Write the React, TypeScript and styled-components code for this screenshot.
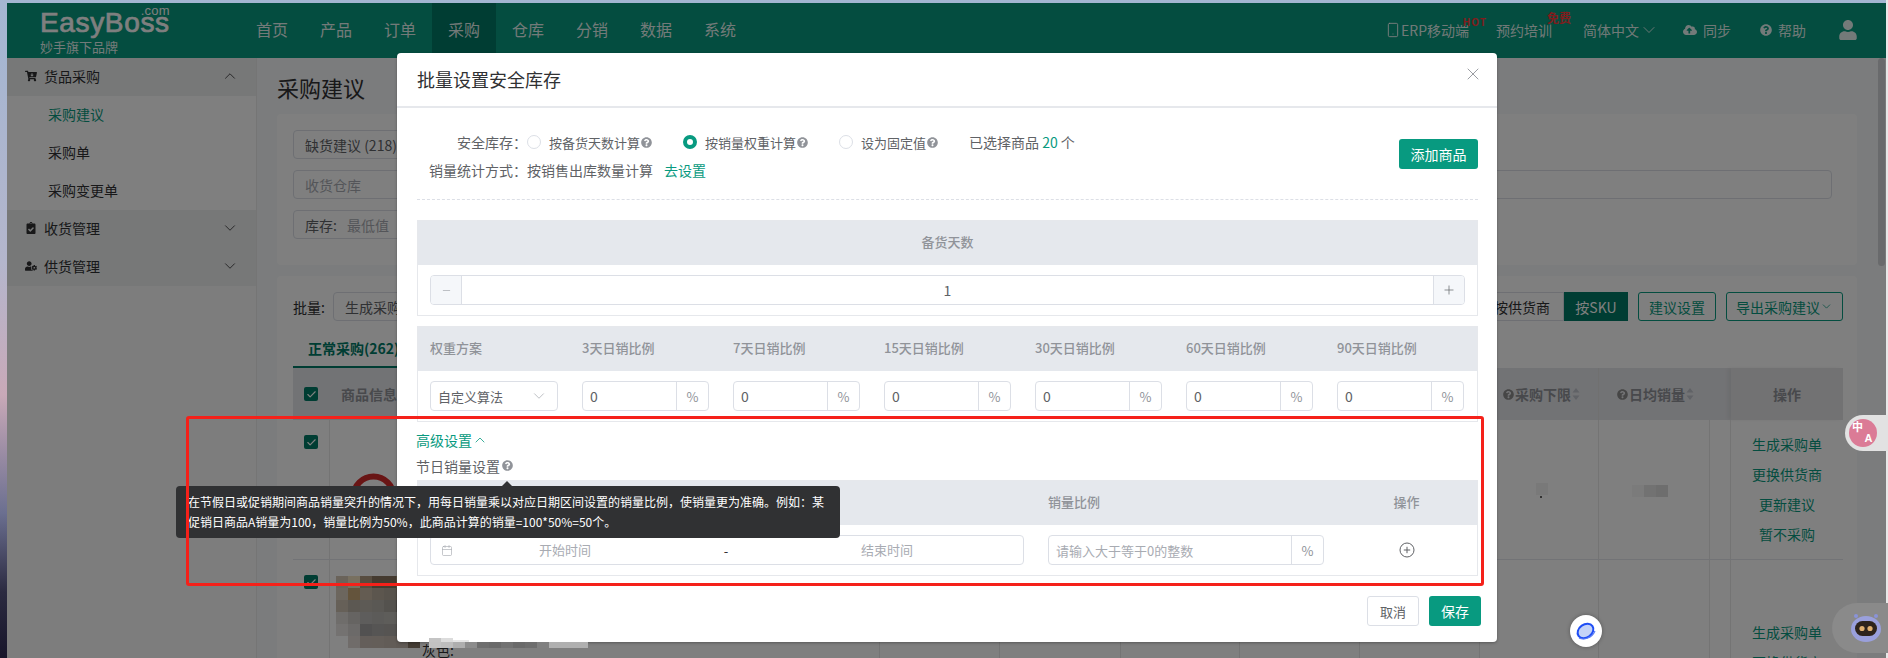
import React from "react";
import styled, { createGlobalStyle } from "styled-components";
import { ChevronUp, ChevronDown, X, Plus, Minus, Smartphone, Calendar, Check } from "lucide-react";
import { FaQuestionCircle, FaCloudUploadAlt, FaUser, FaClipboardCheck, FaUserCog, FaCartArrowDown } from "react-icons/fa";

const TEAL = "#089a80";
const FONT = `"Noto Sans CJK SC", "Noto Sans", sans-serif`;

const Global = createGlobalStyle`
  html, body { margin: 0; padding: 0; width: 1888px; height: 658px; overflow: hidden; }
  * { box-sizing: border-box; }
  body { font-family: ${FONT}; font-size: 14px; color: #606266; }
`;

const Desktop = styled.div`
  position: relative; width: 1888px; height: 658px; overflow: hidden; padding: 3px 2px 0 7px;
  background:
    linear-gradient(to left, #e8e8e8 2px, transparent 2px),
    linear-gradient(180deg, #a3b6d2 0%, #b4b6cc 40%, #c9a9b8 60%, #6b6f90 78%, #2b2a40 90%, #17152a 100%);
`;
const Win = styled.div`
  position: relative; width: 1879px; height: 655px; background: #fff; display: flex; flex-direction: column; overflow: hidden;
`;
const Header = styled.header`
  height: 55px; flex: none; background: ${TEAL}; color: #fff; display: flex; align-items: stretch;
`;
const Logo = styled.div`
  width: 233px; flex: none; padding: 4px 0 0 33px; display: flex; flex-direction: column;
`;
const LogoMain = styled.div`
  position: relative; width: 130px; font: 400 28px/32px "Liberation Sans", sans-serif; color: #fff; letter-spacing: 0.65px; -webkit-text-stroke: 0.7px #fff;
`;
const LogoCom = styled.span`
  position: absolute; right: 0; top: -3px; font: 400 13px/14px "Liberation Sans", sans-serif; letter-spacing: 0.3px; -webkit-text-stroke: 0;
`;
const LogoSub = styled.div`
  font-size: 13px; line-height: 18px; margin-top: -1px; opacity: .9;
`;
const Nav = styled.nav`
  display: flex; align-items: stretch; flex: 1;
`;
const NavItem = styled.div<{ $active?: boolean }>`
  width: 64px; display: flex; align-items: center; justify-content: center; font-size: 16px; padding-bottom: 3px;
  color: rgba(255,255,255,.92); background: ${(p) => (p.$active ? "#007a66" : "transparent")};
`;
const HeaderRight = styled.div`
  display: flex; align-items: center; font-size: 14px; color: rgba(255,255,255,.9); padding-bottom: 2px;
`;
const HItem = styled.div<{ $gap: number }>`
  position: relative; display: flex; align-items: center; margin-right: ${(p) => p.$gap}px; white-space: nowrap; gap: 4px; line-height: 20px;
`;
const Badge = styled.span<{ $size: number; $right: number; $top: number }>`
  position: absolute; top: ${(p) => p.$top}px; right: ${(p) => p.$right}px; font-size: ${(p) => p.$size}px; font-weight: 700; line-height: 14px; color: #ff3b3b; letter-spacing: ${(p) => (p.$size < 12 ? "1px" : "0")};
`;

const Body = styled.div`
  flex: 1; display: flex; min-height: 0;
`;
const Sidebar = styled.aside`
  width: 250px; flex: none; background: #fafafa; border-right: 1px solid #eaeaea;
`;
const MenuHead = styled.div`
  height: 38px; background: #eff0f1; color: #303133; display: flex; align-items: center; padding: 0 17px 2px 18px; gap: 7px; font-size: 14px;
  span { flex: 1; }
`;
const MenuItem = styled.div<{ $active?: boolean }>`
  height: 38px; background: #fff; display: flex; align-items: center; padding: 0 0 2px 41px; font-size: 14px;
  color: ${(p) => (p.$active ? TEAL : "#303133")};
`;
const Main = styled.main`
  flex: 1; min-width: 0; background: #f7f8fa; padding: 0 29px 0 20px;
`;
const PageTitle = styled.h1`
  margin: 0; height: 56px; display: flex; align-items: center; font-size: 22px; font-weight: 400; color: #303133; padding-top: 2px;
`;
const Card = styled.section`
  background: #fff; padding: 16px 25px 0 16px; border-radius: 4px;
`;
const FilterCard = styled(Card)`
  height: 151px; margin-bottom: 11px; display: flex; flex-direction: column; gap: 11px;
`;
const FilterRow = styled.div`
  display: flex; justify-content: space-between;
`;
const Field = styled.div<{ $w: number; $dim?: boolean }>`
  width: ${(p) => p.$w}px; height: 29px; border: 1px solid #dcdfe6; border-radius: 4px; display: flex; align-items: center; padding: 0 11px; font-size: 14px; white-space: nowrap; overflow: hidden;
  color: ${(p) => (p.$dim ? "#a8abb2" : "#606266")};
  b { font-weight: 400; color: #606266; margin-right: 10px; }
`;
const TableCard = styled(Card)`
  height: 400px; padding-right: 14px;
`;
const Toolbar = styled.div`
  display: flex; align-items: center; height: 29px;
`;
const BatchLabel = styled.span`
  color: #303133; margin-right: 8px; font-size: 14px;
`;
const Spacer = styled.div`flex: 1;`;
const Seg = styled.div<{ $on?: boolean }>`
  height: 29px; padding: 0 ${(p) => (p.$on ? 7 : 13)}px; display: flex; align-items: center; justify-content: center; font-size: 14px; border: 1px solid #dcdfe6; min-width: ${(p) => (p.$on ? 64 : 0)}px;
  color: ${(p) => (p.$on ? "#fff" : "#303133")}; background: ${(p) => (p.$on ? "#007a66" : "#fff")};
  border-color: ${(p) => (p.$on ? "#007a66" : "#dcdfe6")};
`;
const OutlineBtn = styled.div<{ $w: number }>`
  width: ${(p) => p.$w}px; height: 29px; margin-left: 10px; display: flex; align-items: center; justify-content: center; font-size: 14px; color: ${TEAL}; border: 1px solid ${TEAL}; border-radius: 3px; background: #fff; white-space: nowrap;
`;
const Tabs = styled.div`
  height: 47px; display: flex; align-items: flex-end;
`;
const Tab = styled.div`
  width: 200px; height: 36px; padding-left: 15px; border-bottom: 2px solid #007a66; color: #007a66; font-weight: 700; font-size: 14px; line-height: 32px;
`;
const GRID = "37px 550px 120px 121px 119px 120px 120px 119px 111px 21px 112px";
const THead = styled.div`
  display: grid; grid-template-columns: ${GRID}; height: 52px; background: #e5e6ea; color: #909399; font-size: 14px; font-weight: 700;
`;
const HCell = styled.div<{ $from: number; $to: number; $center?: boolean; $line?: boolean; $pad: number }>`
  grid-column: ${(p) => p.$from} / ${(p) => p.$to}; display: flex; align-items: center; gap: 1px; padding-left: ${(p) => p.$pad}px;
  justify-content: ${(p) => (p.$center ? "center" : "flex-start")};
  border-right: ${(p) => (p.$line ? "1px solid #e0e0e0" : "0")};
`;
const FixedHead = styled(HCell)`
  background: #e4e4e6; box-shadow: -3px 0 4px rgba(0,0,0,.06);
`;
const TRow = styled.div<{ $h: number }>`
  display: grid; grid-template-columns: ${GRID}; height: ${(p) => p.$h}px; border-bottom: 1px solid #e4e7ed;
`;
const TCell = styled.div`
  position: relative; border-right: 1px solid #e9e9e9; min-width: 0;
`;
const CheckBox = styled.div`
  width: 14px; height: 14px; border-radius: 2px; background: #007a66; color: #fff; display: flex; align-items: center; justify-content: center; margin: 15px 0 0 11px;
`;
const HeadCheck = styled(CheckBox)`
  margin: 0 0 0 11px; align-self: center;
`;
const ActionCol = styled.div<{ $top: number }>`
  display: flex; flex-direction: column; align-items: center; gap: 10px; padding-top: ${(p) => p.$top}px; color: ${TEAL}; font-size: 14px; line-height: 20px; white-space: nowrap;
`;
const Blot = styled.svg<{ $l: number; $t: number }>`
  position: absolute; left: ${(p) => p.$l}px; top: ${(p) => p.$t}px; display: block;
`;
const ProductText = styled.div`
  position: absolute; left: 92px; top: 80px; color: #303133; font-size: 14px; line-height: 20px; white-space: nowrap;
`;

/* overlay */
const Overlay = styled.div`
  position: absolute; inset: 0; background: rgba(0,0,0,.5);
`;
const Modal = styled.div`
  position: absolute; left: 390px; top: 50px; width: 1100px; height: 589px; background: #fff; border-radius: 4px; display: flex; flex-direction: column; box-shadow: 0 1px 3px rgba(0,0,0,.3);
`;
const MHead = styled.div`
  height: 55px; flex: none; padding: 0 14px 2px 20px; border-bottom: 2px solid #e6e8ec; display: flex; align-items: center; justify-content: space-between;
  font-size: 18px; color: #303133;
  svg { color: #909399; margin-top: -9px; }
`;
const MBody = styled.div`
  flex: 1; padding: 21px 19px 0 20px; display: flex; flex-direction: column; min-height: 0;
`;
const TopArea = styled.div`
  display: flex; justify-content: space-between; align-items: flex-start; height: 56px;
`;
const FormCol = styled.div`
  display: flex; flex-direction: column; margin-top: -1px;
`;
const FormRow = styled.div`
  display: flex; align-items: center; height: 28px; white-space: nowrap;
`;
const Label = styled.div`
  width: 110px; text-align: right; font-size: 14px; color: #606266;
`;
const RadioItem = styled.div`
  display: flex; align-items: center; margin-right: 31px; font-size: 13px; color: #606266;
`;
const RadioDot = styled.span<{ $on?: boolean }>`
  width: 14px; height: 14px; border-radius: 50%; margin-right: 8px; flex: none;
  border: ${(p) => (p.$on ? `4.5px solid ${TEAL}` : "1px solid #dcdfe6")}; background: #fff;
`;
const Help = styled(FaQuestionCircle)`
  color: #909399; font-size: 11px; margin-left: 1px; flex: none;
`;
const THelp = styled(FaQuestionCircle)`
  color: #8c8c8c; font-size: 11px; flex: none;
`;
const TealText = styled.span`
  color: ${TEAL};
`;
const Link = styled.span`
  color: ${TEAL}; margin-left: 11px; font-size: 14px;
`;
const PrimaryBtn = styled.div<{ $w: number }>`
  width: ${(p) => p.$w}px; height: 30px; background: ${TEAL}; color: #fff; border-radius: 3px; display: flex; align-items: center; justify-content: center; font-size: 14px; flex: none;
`;
const AddBtn = styled(PrimaryBtn)`
  margin-top: 10px;
`;
const Dashed = styled.div`
  border-top: 1px dashed #dcdfe6; margin-top: 14px; width: 1061px;
`;
const Table = styled.div<{ $mt: number }>`
  width: 1061px; border: 1px solid #e6e8ec; margin-top: ${(p) => p.$mt}px; flex: none;
`;
const THeader = styled.div<{ $cols: string }>`
  display: grid; grid-template-columns: ${(p) => p.$cols}; height: 44px; padding-bottom: 3px; background: #e5e8ed; align-items: center; font-size: 13px; font-weight: 500; color: #909399;
`;
const THCell = styled.div<{ $center?: boolean }>`
  padding-left: ${(p) => (p.$center ? 0 : 12)}px; text-align: ${(p) => (p.$center ? "center" : "left")};
`;
const TBody = styled.div<{ $cols: string }>`
  display: grid; grid-template-columns: ${(p) => p.$cols}; height: 50px; align-items: center;
`;
const BCell = styled.div<{ $center?: boolean }>`
  padding: 0 12px; display: flex; align-items: center; justify-content: ${(p) => (p.$center ? "center" : "flex-start")};
`;
const Box = styled.div`
  height: 30px; width: 100%; border: 1px solid #dcdfe6; border-radius: 4px; display: flex; align-items: center; background: #fff; font-size: 13px; color: #606266; overflow: hidden;
`;
const StepBtn = styled.div`
  width: 31px; height: 100%; flex: none; background: #f5f7fa; color: #909399; display: flex; align-items: center; justify-content: center;
`;
const StepLeft = styled(StepBtn)`border-right: 1px solid #dcdfe6;`;
const StepRight = styled(StepBtn)`border-left: 1px solid #dcdfe6; color: #606266;`;
const StepValue = styled.div`
  flex: 1; text-align: center; font-size: 14px; padding-bottom: 1px;
`;
const BoxText = styled.div<{ $muted?: boolean }>`
  flex: 1; padding-left: 7px; white-space: nowrap; font-size: ${(p) => (p.$muted ? 13 : 14)}px; color: ${(p) => (p.$muted ? "#a8abb2" : "#606266")};
`;
const Addon = styled.div`
  width: 32px; height: 100%; flex: none; border-left: 1px solid #dcdfe6; display: flex; align-items: center; justify-content: center; color: #909399; font-size: 13px;
`;
const SelectBox = styled(Box)`
  padding: 0 7px; justify-content: space-between; font-size: 13px;
  svg { color: #a8abb2; margin-right: 2px; }
`;
const Advanced = styled.div`
  margin-top: 9px; height: 20px; line-height: 20px; padding-bottom: 2px; font-size: 14px; color: ${TEAL}; display: flex; align-items: center; margin-left: -1px;
`;
const Section = styled.div`
  margin-top: 6px; height: 20px; line-height: 20px; font-size: 14px; color: #606266; display: flex; align-items: center; margin-left: -1px; padding-bottom: 3px;
  svg { font-size: 11px; margin-left: 2px; }
`;
const RangeIcon = styled.span`
  width: 12px; margin-left: 10px; flex: none; display: flex; color: #a8abb2;
`;
const RangeInput = styled.div`
  width: 224px; flex: none; text-align: center; color: #a8abb2; font-size: 13px; padding-bottom: 1px;
`;
const RangeDash = styled.div`
  width: 98px; flex: none; text-align: center; color: #303133;
`;
const MFoot = styled.div`
  height: 62px; flex: none; padding: 16px 16px 0 0; display: flex; justify-content: flex-end; gap: 10px;
`;
const GhostBtn = styled.div`
  width: 52px; height: 30px; border: 1px solid #dcdfe6; border-radius: 3px; display: flex; align-items: center; justify-content: center; font-size: 13px; color: #606266;
`;

/* things that lie on top */
const Tip = styled.div`
  position: absolute; left: 176px; top: 486px; width: 664px; height: 52px; padding: 6px 12px; background: #303133; color: #fff; border-radius: 4px; font-size: 12px; line-height: 20px;
  &::before { content: ""; position: absolute; left: 325px; top: -5px; border: 6px solid transparent; border-top: 0; border-bottom: 6px solid #303133; }
`;
const RedBox = styled.div`
  position: absolute; left: 186px; top: 416px; width: 1298px; height: 170px; border: 3px solid #f5211a; border-radius: 3px; pointer-events: none;
`;
const Translator = styled.div`
  position: absolute; right: 0; top: 415px; width: 43px; height: 36px; background: #e2e2e2; border-radius: 18px 0 0 18px; display: flex; align-items: center; padding-left: 4px;
`;
const TransDot = styled.div`
  width: 28px; height: 28px; border-radius: 50%; background: #db7b96; color: #fff; display: grid; grid-template-columns: 11px 11px; grid-template-rows: 11px 11px; padding: 3px; font-size: 11px; line-height: 11px; font-weight: 700; text-align: center;
`;
const TransCell = styled.span<{ $end?: boolean }>`
  grid-column: ${(p) => (p.$end ? 2 : 1)}; grid-row: ${(p) => (p.$end ? 2 : 1)}; font-family: "Liberation Sans", "Noto Sans CJK SC", sans-serif;
`;
const BlueBall = styled.div`
  position: absolute; left: 1570px; top: 615px; width: 32px; height: 32px; border-radius: 50%; background: #fff; display: flex; align-items: center; justify-content: center; box-shadow: 0 0 4px rgba(0,0,0,.3);
`;
const RobotDock = styled.div`
  position: absolute; right: 0; top: 603px; width: 56px; height: 50px; background: #8a8a8a; border-radius: 25px 0 0 25px; display: flex; align-items: center; padding-left: 18px;
`;
const Thumb = styled.div`
  position: absolute; left: 1878px; top: 58px; width: 7px; height: 208px; background: #696a6c; border-radius: 4px;
`;
const TextBlur = styled.svg`
  position: absolute; left: 429px; top: 638px; display: block;
`;

const weights = ["3天日销比例", "7天日销比例", "15天日销比例", "30天日销比例", "60天日销比例", "90天日销比例"];
const COLS2 = "152px repeat(6, 151px)";
const COLS3 = "618px 300px 1fr";

const bagRows = [
  ["#d4c6b4", "#f0e0c0", "#b09a80", "#8a7660", "#8a7660", "#b0a080", "#a08a70"],
  ["#d8cdbc", "#c8a878", "#c8b8a4", "#b8ac9c", "#b0a698", "#a49a8c", "#c0b8ac"],
  ["#ccc0b0", "#b8b0a4", "#bab4aa", "#b4b0a8", "#a8a49c", "#8e8a84", "#b0a89c"],
  ["#dedad6", "#ccc8c4", "#bcbab8", "#b8b6b2", "#bcbab4", "#b4b2ac", "#c0bab0"],
  ["#e8e4e2", "#d8d4d2", "#a4a2a2", "#acaaa8", "#aca8a4", "#a8a4a0", "#c0b8b0"],
  ["#ffffff", "#e0d8d4", "#c8bcb4", "#c8bcb2", "#c4b8ae", "#c0b4aa", "#887868"],
];
const blurRow = ["#c2c2c2", "#bdbdbd", "#aeaeae", "#8c8c8c", "#6e6e6e", "#6a6a6a", "#727272", "#6a6a6a", "#6e6e6e", "#808080", "#9a9a9a", "#727272", "#6c6c6c", "#7a7a7a"];

export default function App() {
  return (
    <>
      <Global />
      <Desktop>
        <Win>
          <Header>
            <Logo>
              <LogoMain>EasyBoss<LogoCom>.com</LogoCom></LogoMain>
              <LogoSub>妙手旗下品牌</LogoSub>
            </Logo>
            <Nav>
              {["首页", "产品", "订单", "采购", "仓库", "分销", "数据", "系统"].map((n) => (
                <NavItem key={n} $active={n === "采购"}>{n}</NavItem>
              ))}
            </Nav>
            <HeaderRight>
              <HItem $gap={27}><Smartphone size={16} strokeWidth={1.5} style={{ marginRight: -4 }} />ERP移动端<Badge $size={10} $right={-18} $top={-5}>HOT</Badge></HItem>
              <HItem $gap={31}>预约培训<Badge $size={12} $right={-19} $top={-9}>免费</Badge></HItem>
              <HItem $gap={24}>简体中文<ChevronDown size={20} strokeWidth={1.1} style={{ marginLeft: -4 }} /></HItem>
              <HItem $gap={29}><FaCloudUploadAlt size={14} style={{ marginRight: 2 }} />同步</HItem>
              <HItem $gap={32}><FaQuestionCircle size={12} style={{ marginRight: 2 }} />帮助</HItem>
              <HItem $gap={28}><FaUser size={20} /></HItem>
            </HeaderRight>
          </Header>
          <Body>
            <Sidebar>
              <MenuHead><FaCartArrowDown size={12} /><span>货品采购</span><ChevronUp size={18} strokeWidth={1.1} /></MenuHead>
              <MenuItem $active>采购建议</MenuItem>
              <MenuItem>采购单</MenuItem>
              <MenuItem>采购变更单</MenuItem>
              <MenuHead><FaClipboardCheck size={12} /><span>收货管理</span><ChevronDown size={18} strokeWidth={1.1} /></MenuHead>
              <MenuHead><FaUserCog size={12} /><span>供货管理</span><ChevronDown size={18} strokeWidth={1.1} /></MenuHead>
            </Sidebar>
            <Main>
              <PageTitle>采购建议</PageTitle>
              <FilterCard>
                <FilterRow><Field $w={300}>缺货建议 (218)</Field></FilterRow>
                <FilterRow><Field $w={300} $dim>收货仓库</Field><Field $w={635} $dim>商品名称(双击输入更多)</Field></FilterRow>
                <FilterRow><Field $w={300} $dim><b>库存:</b>最低值</Field></FilterRow>
              </FilterCard>
              <TableCard>
                <Toolbar>
                  <BatchLabel>批量:</BatchLabel>
                  <Field $w={130}>生成采购单</Field>
                  <Spacer />
                  <Seg>按供货商</Seg>
                  <Seg $on>按SKU</Seg>
                  <OutlineBtn $w={78}>建议设置</OutlineBtn>
                  <OutlineBtn $w={117}>导出采购建议<ChevronDown size={13} strokeWidth={1.4} /></OutlineBtn>
                </Toolbar>
                <Tabs><Tab>正常采购(262)</Tab></Tabs>
                <THead>
                  <HeadCheck><Check size={11} strokeWidth={2.5} /></HeadCheck>
                  <HCell $from={2} $to={3} $pad={11}>商品信息</HCell>
                  <HCell $from={8} $to={9} $line $pad={23}><THelp />采购下限
                    <svg width="8" height="14" viewBox="0 0 8 14" fill="#c0c4cc"><path d="M4 1l3.5 4.5h-7zM4 13L.5 8.5h7z" /></svg>
                  </HCell>
                  <HCell $from={9} $to={11} $pad={18}><THelp />日均销量
                    <svg width="8" height="14" viewBox="0 0 8 14" fill="#c0c4cc"><path d="M4 1l3.5 4.5h-7zM4 13L.5 8.5h7z" /></svg>
                  </HCell>
                  <FixedHead $from={11} $to={12} $center $pad={0}>操作</FixedHead>
                </THead>
                <TRow $h={140}>
                  <TCell><CheckBox><Check size={11} strokeWidth={2.5} /></CheckBox></TCell>
                  <TCell>
                    <Blot $l={20} $t={53} width="47" height="47" viewBox="0 0 47 47">
                      <circle cx="23.5" cy="23.5" r="20" fill="none" stroke="#d22b2b" strokeWidth="6" />
                    </Blot>
                  </TCell>
                  <TCell /><TCell /><TCell /><TCell /><TCell />
                  <TCell>
                    <Blot $l={56} $t={63} width="12" height="15" viewBox="0 0 12 15"><rect width="12" height="12" fill="#f2f2f2" /><rect x="4" y="13" width="2" height="2" fill="#666" /></Blot>
                  </TCell>
                  <TCell>
                    <Blot $l={33} $t={65} width="36" height="12" viewBox="0 0 36 12"><rect width="12" height="12" fill="#f6f6f6" /><rect x="12" width="12" height="12" fill="#e4e4e4" /><rect x="24" width="12" height="12" fill="#dcdcdc" /></Blot>
                  </TCell>
                  <TCell />
                  <ActionCol $top={14}>
                    <span>生成采购单</span><span>更换供货商</span><span>更新建议</span><span>暂不采购</span>
                  </ActionCol>
                </TRow>
                <TRow $h={160}>
                  <TCell><CheckBox><Check size={11} strokeWidth={2.5} /></CheckBox></TCell>
                  <TCell>
                    <Blot $l={6} $t={16} width="84" height="72" viewBox="0 0 84 72">
                      {bagRows.map((row, y) => row.map((c, x) => <rect key={`${x}-${y}`} x={x * 12} y={y * 12} width="12" height="12" fill={c} />))}
                    </Blot>
                    <ProductText>灰色:</ProductText>
                  </TCell>
                  <TCell /><TCell /><TCell /><TCell /><TCell /><TCell /><TCell /><TCell />
                  <ActionCol $top={62}>
                    <span>生成采购单</span><span>更换供货商</span>
                  </ActionCol>
                </TRow>
              </TableCard>
            </Main>
          </Body>
          <Overlay />
          <Modal>
            <MHead>批量设置安全库存<X size={20} strokeWidth={1.1} /></MHead>
            <MBody>
              <TopArea>
                <FormCol>
                  <FormRow>
                    <Label>安全库存：</Label>
                    <RadioItem><RadioDot />按备货天数计算<Help /></RadioItem>
                    <RadioItem><RadioDot $on />按销量权重计算<Help /></RadioItem>
                    <RadioItem><RadioDot />设为固定值<Help /></RadioItem>
                    <span>已选择商品 <TealText>20</TealText> 个</span>
                  </FormRow>
                  <FormRow>
                    <Label>销量统计方式：</Label>
                    按销售出库数量计算<Link>去设置</Link>
                  </FormRow>
                </FormCol>
                <AddBtn $w={79}>添加商品</AddBtn>
              </TopArea>
              <Dashed />
              <Table $mt={20}>
                <THeader $cols="1fr"><THCell $center>备货天数</THCell></THeader>
                <TBody $cols="1fr">
                  <BCell>
                    <Box>
                      <StepLeft><Minus size={11} strokeWidth={1.2} /></StepLeft>
                      <StepValue>1</StepValue>
                      <StepRight><Plus size={14} strokeWidth={1.2} /></StepRight>
                    </Box>
                  </BCell>
                </TBody>
              </Table>
              <Table $mt={10}>
                <THeader $cols={COLS2}>
                  <THCell>权重方案</THCell>
                  {weights.map((w) => <THCell key={w}>{w}</THCell>)}
                </THeader>
                <TBody $cols={COLS2}>
                  <BCell><SelectBox>自定义算法<ChevronDown size={18} strokeWidth={1} /></SelectBox></BCell>
                  {weights.map((w) => (
                    <BCell key={w}><Box><BoxText>0</BoxText><Addon>%</Addon></Box></BCell>
                  ))}
                </TBody>
              </Table>
              <Advanced>高级设置<ChevronUp size={16} strokeWidth={1.2} /></Advanced>
              <Section>节日销量设置<Help /></Section>
              <Table $mt={3}>
                <THeader $cols={COLS3}>
                  <THCell $center>日期区间</THCell>
                  <THCell>销量比例</THCell>
                  <THCell $center>操作</THCell>
                </THeader>
                <TBody $cols={COLS3}>
                  <BCell>
                    <Box>
                      <RangeIcon><Calendar size={13} strokeWidth={1.3} /></RangeIcon>
                      <RangeInput>开始时间</RangeInput>
                      <RangeDash>-</RangeDash>
                      <RangeInput>结束时间</RangeInput>
                    </Box>
                  </BCell>
                  <BCell><Box><BoxText $muted>请输入大于等于0的整数</BoxText><Addon>%</Addon></Box></BCell>
                  <BCell $center>
                    <svg width="16" height="16" viewBox="0 0 16 16" fill="none" stroke="#606266" strokeWidth="1"><circle cx="8" cy="8" r="7" /><path d="M8 4.8v6.4M4.8 8h6.4" /></svg>
                  </BCell>
                </TBody>
              </Table>
            </MBody>
            <MFoot>
              <GhostBtn>取消</GhostBtn>
              <PrimaryBtn $w={52}>保存</PrimaryBtn>
            </MFoot>
          </Modal>
        </Win>
        <Tip>在节假日或促销期间商品销量突升的情况下，用每日销量乘以对应日期区间设置的销量比例，使销量更为准确。例如：某促销日商品A销量为100，销量比例为50%，此商品计算的销量=100*50%=50个。</Tip>
        <RedBox />
        <TextBlur width="159" height="10" viewBox="0 0 159 10">
          <rect width="12" height="4" fill="#c4c4c4" /><rect x="12" width="12" height="4" fill="#dcdcdc" /><rect x="24" y="2" width="16" height="2" fill="#e6e6e6" />
          {blurRow.map((c, i) => <rect key={i} x={i * 12} y="4" width={i === 13 ? 3 : 12} height="6" fill={c} />)}
          <rect x="120" y="4" width="39" height="6" fill="#b0b0b0" />
        </TextBlur>
        <Thumb />
        <Translator><TransDot><TransCell>中</TransCell><TransCell $end>A</TransCell></TransDot></Translator>
        <BlueBall>
          <svg width="24" height="24" viewBox="0 0 24 24" fill="none">
            <ellipse cx="11.5" cy="12" rx="8.5" ry="6.5" transform="rotate(-35 11.5 12)" fill="#c4d3f7" stroke="#1f4ef5" strokeWidth="2" />
            <path d="M5 19c5 2.5 13 0 16-7" stroke="#5b7df5" strokeWidth="1.2" />
          </svg>
        </BlueBall>
        <RobotDock>
          <svg width="32" height="34" viewBox="0 0 32 34">
            <circle cx="6" cy="5" r="2" fill="#8a93d8" /><circle cx="26" cy="5" r="2" fill="#8a93d8" />
            <ellipse cx="16" cy="18" rx="15" ry="13" fill="#9aa0dc" />
            <rect x="5" y="10" width="22" height="15" rx="7.5" fill="#2e241c" />
            <circle cx="12" cy="17.5" r="2.6" fill="#e0b070" /><circle cx="20" cy="17.5" r="2.6" fill="#e0b070" />
          </svg>
        </RobotDock>
      </Desktop>
    </>
  );
}
